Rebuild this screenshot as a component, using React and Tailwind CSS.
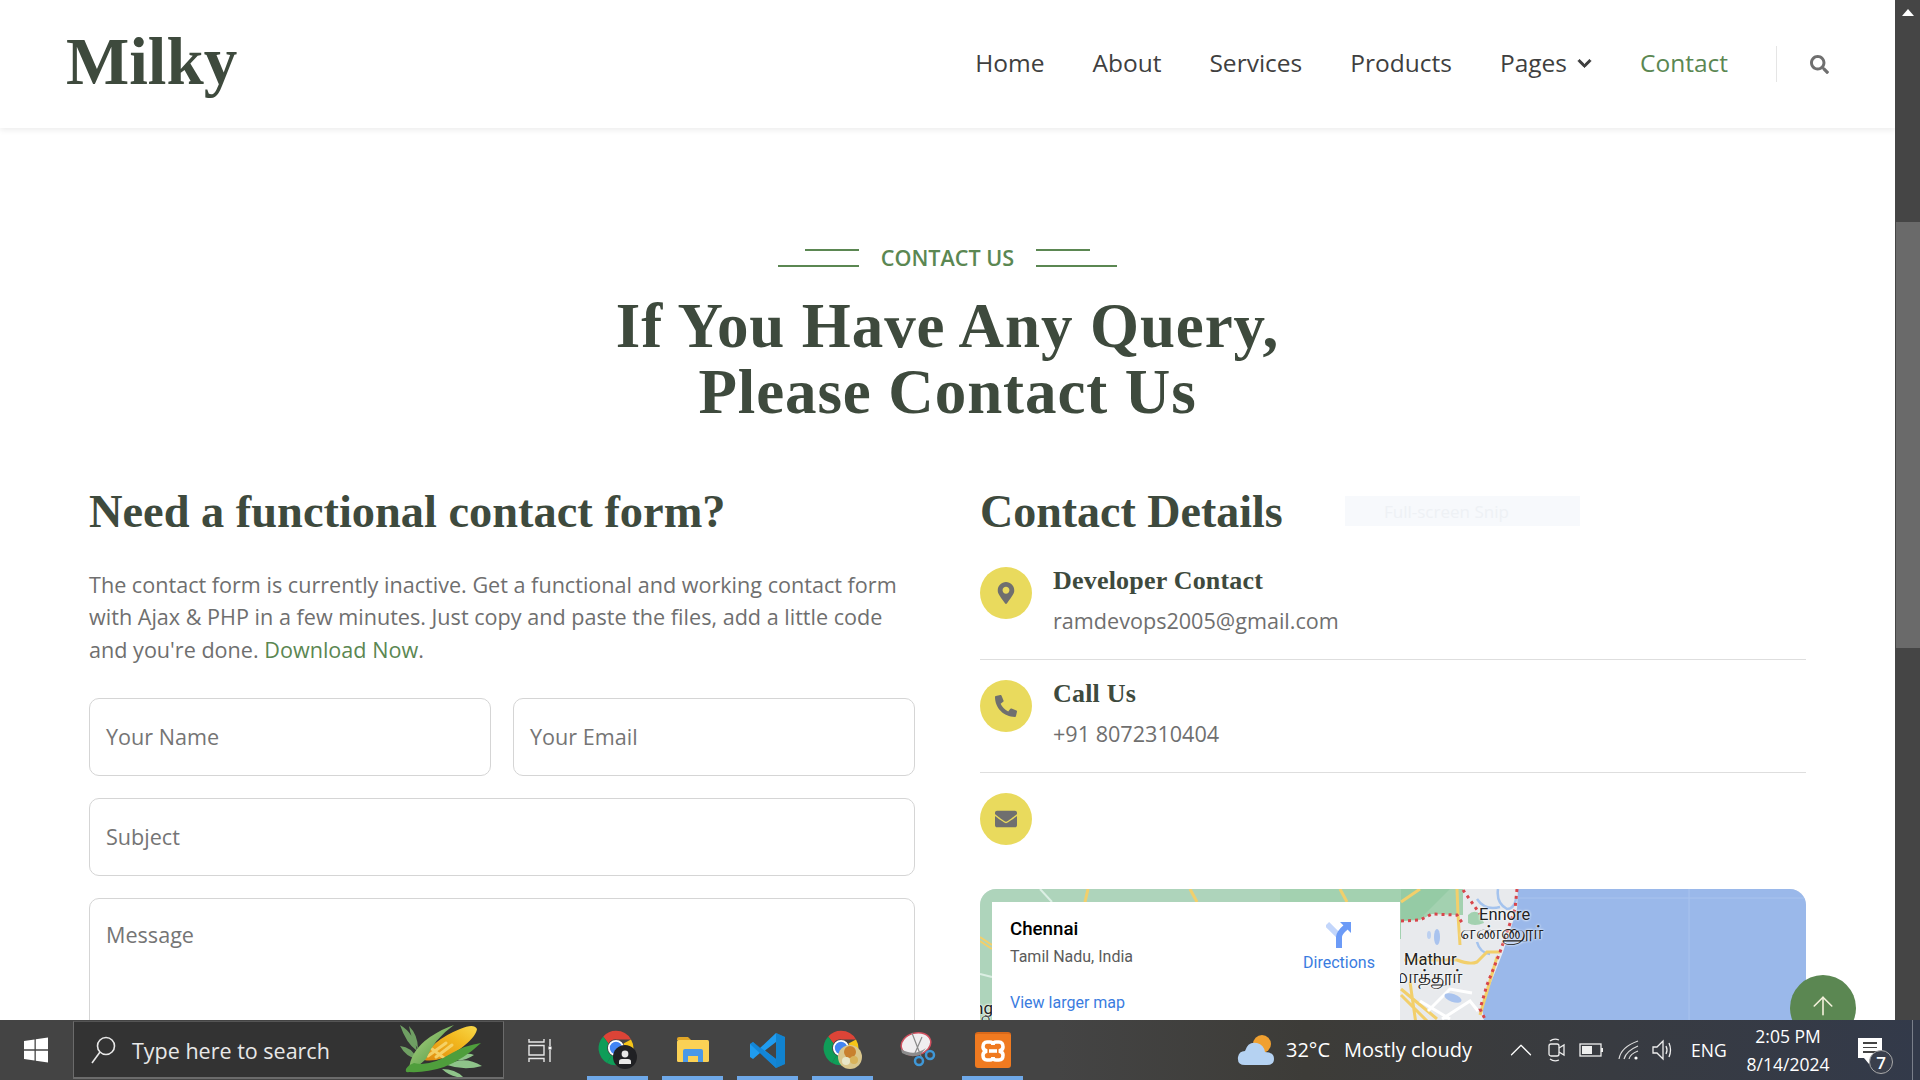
import React from 'react';
import { FaMapMarkerAlt, FaPhoneAlt, FaEnvelope, FaSearch, FaChevronDown } from 'react-icons/fa';
import { ArrowUp, ChevronUp } from 'lucide-react';

const serif = "font-['Liberation_Serif',serif]";

function Eyebrow() {
  const Lines = ({ right }) => (
    <div className={`flex flex-col gap-[14px] w-[81px] ${right ? 'items-start' : 'items-end'}`}>
      <div className="w-[54px] h-[2px] bg-[#5b8752]" />
      <div className="w-[81px] h-[2px] bg-[#5b8752]" />
    </div>
  );
  return (
    <div className="flex items-center justify-center gap-[22px]">
      <Lines />
      <span className="text-[21.6px] leading-[30px] font-semibold text-[#5b8752]">CONTACT US</span>
      <Lines right />
    </div>
  );
}

function Field({ label, className = '' }) {
  return (
    <div className={`border border-[#d5d5d5] rounded-[10px] px-[16px] text-[21.6px] text-[#757575] bg-white ${className}`}>
      {label}
    </div>
  );
}

function Detail({ Icon, title, text, size, last }) {
  return (
    <div className={`flex gap-[21px] h-[113px] ${last ? '' : 'border-b border-[#dedede]'}`}>
      <div className="w-[52px] h-[52px] rounded-full bg-[#e9da5d] flex items-center justify-center mt-[20px] shrink-0 text-[#6f6f6f]">
        <Icon size={size} />
      </div>
      {title && (
        <div className="pt-[19px]">
          <div className={`${serif} font-bold text-[26px] leading-[30px] text-[#3e4a3d] tracking-[0.2px]`}>{title}</div>
          <div className="text-[21.6px] leading-[30px] text-[#6f6f6f] mt-[10px]">{text}</div>
        </div>
      )}
    </div>
  );
}

function MapBase() {
  return (
    <svg width="826" height="140" viewBox="0 0 826 140" className="block">
      <rect width="826" height="140" fill="#e8eaed" />
      <path d="M0 0H300V140H0Z" fill="#aed4bb" />
      <path d="M300 0H483V26L477 26L452 25L440 31L421 32V50H300Z" fill="#a3d1b0" />
      <path d="M421 0H470L440 30L421 32Z" fill="#95cba5" />
      <path d="M488 26 Q494 20 500 25 L504 34 Q494 38 488 34Z" fill="#a3d1b0" />
      <path d="M538 0 L537 20 L523 63 L510 96 L502 116 L505 140 H826 V0Z" fill="#9ab8ea" />
      <path d="M709 0V140M537 9H826" stroke="#a9c3ee" strokeWidth="1" fill="none" />
      <path d="M518 0 Q516 14 527 20 Q534 20 536 10M497 53 Q500 64 510 65M497 10 Q505 22 520 18" stroke="#a4c3ee" strokeWidth="2.5" fill="none" />
      <path d="M360 0 L367 13M440 0 L421 13M477 0 L478 26 L480 56M424 71 H477 Q490 76 497 73 L507 63 H520M517 68 L500 126M421 100 L457 130M421 106 L450 135M430 93 L436 135M108 0 L105 13M210 0 L217 13" stroke="#f2cf6b" strokeWidth="3" fill="none" />
      <path d="M0 48 L12 56M0 52 L12 60" stroke="#f2cf6b" strokeWidth="2" fill="none" />
      <path d="M60 0 L72 13M0 85 L12 88" stroke="#dcefe4" strokeWidth="2" fill="none" />
      <path d="M448 122 L470 100 L492 104 M462 130 L490 112 L498 122 M440 112 L470 130" stroke="#ffffff" strokeWidth="3" fill="none" />
      <path d="M421 32 L440 31 L452 25 L477 26 L483 35M483 1 L500 25M537 0 L535 20 L520 63 L507 96 L500 120 L505 130" stroke="#d8454b" strokeWidth="3" strokeDasharray="3 4" fill="none" />
      <ellipse cx="457" cy="48" rx="3" ry="8" fill="#a9c3ee" />
      <ellipse cx="449" cy="46" rx="2" ry="4" fill="#bcd0f0" />
      <ellipse cx="473" cy="109" rx="9" ry="4" fill="#a9c3ee" transform="rotate(20 473 109)" />
    </svg>
  );
}

function MapLabel({ children, className }) {
  return <span className={`absolute font-['Roboto','Noto_Sans',sans-serif] leading-[20px] text-[#222] [text-shadow:0_0_2px_#fff,0_0_3px_#fff] ${className}`}>{children}</span>;
}

function GoogleMap() {
  return (
    <div className="relative h-[300px] rounded-[16px] overflow-hidden">
      <MapBase />
      <MapLabel className="left-[499px] top-[16px] text-[16.5px]">Ennore</MapLabel>
      <MapLabel className="left-[480px] top-[33px] text-[20px]">எண்ணூர்</MapLabel>
      <MapLabel className="left-[424px] top-[61px] text-[16.5px]">Mathur</MapLabel>
      <MapLabel className="left-[412px] top-[77px] text-[20px]">மாத்தூர்</MapLabel>
      <MapLabel className="-left-[6px] top-[109px] text-[17px]">ng</MapLabel>
      <MapLabel className="-left-[3px] top-[124px] text-[17px]">நி</MapLabel>
      <div className="absolute left-[12px] top-[13px] w-[408px] h-[200px] bg-white font-['Roboto',sans-serif]">
        <div className="absolute left-[18px] top-[15px] text-[18.7px] leading-[24px] font-medium text-black">Chennai</div>
        <div className="absolute left-[18px] top-[45px] text-[16px] leading-[20px] text-[#5b5b5b]">Tamil Nadu, India</div>
        <div className="absolute left-[18px] top-[91px] text-[16px] leading-[20px] text-[#3a7ce0]">View larger map</div>
        <div className="absolute left-[307px] top-[18px] w-[80px] flex flex-col items-center">
          <svg width="26" height="28" viewBox="0 0 26 28">
            <path d="M1 4 L13 16" stroke="#c3d6fb" strokeWidth="6" fill="none" />
            <path d="M13 28 V17 Q13 13 20 7" stroke="#6c9bf7" strokeWidth="6" fill="none" />
            <path d="M14 2 H25 V13Z" fill="#6c9bf7" />
          </svg>
          <div className="text-[16px] leading-[20px] text-[#3a7ce0] mt-[5px]">Directions</div>
        </div>
      </div>
    </div>
  );
}

function Chrome({ badge }) {
  return (
    <div className="relative w-[40px] h-[40px]">
      <svg width="36" height="36" viewBox="0 0 48 48">
        <path d="M24 1 A23 23 0 0 1 44 12.5 H24 A11.5 11.5 0 0 0 14 18 L7 8.5 A23 23 0 0 1 24 1Z" fill="#dc4437" />
        <path d="M7 8.5 L14 18 A11.5 11.5 0 0 0 18 34 L12 44 A23 23 0 0 1 7 8.5Z" fill="#0f9d58" />
        <path d="M44 12.5 A23 23 0 0 1 24 47 L30 34 A11.5 11.5 0 0 0 34 18Z" fill="#f5c518" />
        <path d="M12 44 L18 34 A11.5 11.5 0 0 0 30 34 L24 47 A23 23 0 0 1 12 44Z" fill="#0f9d58" />
        <circle cx="24" cy="24" r="9.5" fill="#4285f4" stroke="#fff" strokeWidth="2.5" />
      </svg>
      {badge === 'person' ? (
        <div className="absolute left-[15px] top-[15px] w-[24px] h-[24px] rounded-full bg-[#202124] flex items-center justify-center">
          <svg width="16" height="16" viewBox="0 0 16 16"><circle cx="8" cy="5" r="3.4" fill="#e8e8e8" /><path d="M2 15 V12.5 Q2 10 5 10 H11 Q14 10 14 12.5 V15Z" fill="#e8e8e8" /></svg>
        </div>
      ) : (
        <div className="absolute left-[15px] top-[15px] w-[24px] h-[24px] rounded-full bg-[#d9c68c] overflow-hidden">
          <svg width="24" height="24" viewBox="0 0 24 24"><circle cx="12" cy="7" r="6" fill="#c8802e" /><circle cx="8" cy="16" r="4" fill="#e8e6c8" /><circle cx="16" cy="15" r="4" fill="#d8b25a" /></svg>
        </div>
      )}
    </div>
  );
}

const Folder = () => (
  <svg width="34" height="28" viewBox="0 0 34 28">
    <path d="M1 3 Q1 1 3 1 H12 L15 4 H1Z" fill="#e0a526" />
    <rect x="1" y="4" width="32" height="22" rx="1.5" fill="#fbd155" />
    <path d="M7 26 V15 Q7 13 9 13 H25 Q27 13 27 15 V26 H22 V20 H12 V26Z" fill="#4a98e8" />
  </svg>
);

const VSCode = () => (
  <svg width="37" height="37" viewBox="0 0 37 37">
    <path d="M27 1 L36 5 V32 L27 36 L11 21 L4 27 L1 25 V12 L4 10 L11 16Z M27 10 L16 18.5 L27 27Z" fill="#1f9cf0" fillRule="evenodd" />
    <path d="M27 1 L36 5 V32 L27 36Z" fill="#0065a9" opacity="0.45" />
    <path d="M1 12 L4 10 L27 27 V36 L1 12Z" fill="#0a74c4" opacity="0.55" />
  </svg>
);

const Snip = () => (
  <svg width="36" height="38" viewBox="0 0 36 38">
    <ellipse cx="16" cy="13" rx="15" ry="11" fill="#f0eef0" stroke="#d0505f" strokeWidth="1.5" transform="rotate(-15 16 13)" />
    <path d="M1 18 Q14 26 26 17 L20 24 Q10 27 2 22Z" fill="#8c8c8c" />
    <path d="M12 2 L22 28M22 6 L15 22" stroke="#8a8a8a" strokeWidth="1.2" />
    <circle cx="19" cy="30" r="4" fill="none" stroke="#3f98d8" strokeWidth="2.5" />
    <circle cx="30" cy="24" r="4" fill="none" stroke="#3f98d8" strokeWidth="2.5" />
  </svg>
);

const Xampp = () => (
  <div className="w-[36px] h-[36px] rounded-[3px] bg-[#f07a20] border-t-[2px] border-[#d9691a] flex items-center justify-center">
    <svg width="26" height="28" viewBox="0 0 26 28" fill="none" stroke="#fff" strokeWidth="3.6">
      <path d="M7 5 Q3 5 3 10 Q3 13 7 14 Q3 15 3 18 Q3 23 7 23 H10 Q13 23 13 20 Q13 23 16 23 H19 Q23 23 23 18 Q23 15 19 14 Q23 13 23 10 Q23 5 19 5 H16 Q13 5 13 8 Q13 5 10 5Z" />
      <path d="M9 14 H17" />
    </svg>
  </div>
);

const Corn = () => (
  <svg width="82" height="56" viewBox="0 0 82 56">
    <defs>
      <linearGradient id="cob" x1="0" y1="1" x2="1" y2="0">
        <stop offset="0" stopColor="#e08a10" />
        <stop offset="0.6" stopColor="#f2b81e" />
        <stop offset="1" stopColor="#f8d84a" />
      </linearGradient>
      <linearGradient id="husk" x1="0" y1="0" x2="1" y2="1">
        <stop offset="0" stopColor="#b7d88a" />
        <stop offset="1" stopColor="#3f8f36" />
      </linearGradient>
    </defs>
    <path d="M0 2 Q14 10 17 28 Q6 20 0 2Z M9 3 Q18 12 18 26 Q11 16 9 3Z M0 23 Q12 24 17 36 Q6 34 0 23Z" fill="#6f9f63" />
    <path d="M47 42 Q64 32 82 43 Q64 48 47 42Z M42 46 Q56 46 64 55 Q50 54 42 46Z M52 36 Q66 28 74 32 Q62 40 52 36Z" fill="#8fc48a" />
    <path d="M24 37 Q30 18 60 6 Q74 0 77 6 Q76 14 60 26 Q40 40 24 37Z" fill="url(#cob)" />
    <path d="M28 33 L46 20 M36 34 L52 22 M32 26 L44 35" stroke="#f8dc78" strokeWidth="3" strokeLinecap="round" opacity="0.8" />
    <path d="M9 47 Q10 28 30 14 Q44 5 54 2 Q34 16 26 36 Q18 44 9 47Z" fill="url(#husk)" />
    <path d="M9 49 Q5 50 6 46 Q8 42 14 40 Q30 44 52 30 Q66 22 81 20 Q64 36 44 44 Q26 50 9 49Z" fill="#4f9e3c" />
  </svg>
);

function TaskIcon({ active, children }) {
  return (
    <div className="relative w-[61px] h-[60px] flex items-center justify-center mr-[14px]">
      {children}
      {active && <div className="absolute left-0 right-0 bottom-0 h-[4px] bg-[#6ea8e8]" />}
    </div>
  );
}

function Taskbar() {
  return (
    <div className="h-[60px] shrink-0 flex items-center text-white font-['Open_Sans',sans-serif] bg-[linear-gradient(90deg,#444444_0%,#444444_55%,#3d3c38_68%,#333a4a_100%)]">
      <div className="w-[72px] mr-[1px] flex justify-center">
        <svg width="26" height="26" viewBox="0 0 26 26" fill="#fff">
          <path d="M1 4 L11.5 2.5 V12.3 H1Z M12.8 2.3 L25 0.5 V12.3 H12.8Z M1 13.7 H11.5 V23.5 L1 22Z M12.8 13.7 H25 V25.5 L12.8 23.7Z" />
        </svg>
      </div>
      <div className="w-[431px] h-[58px] bg-[#333333] border-b-[2px] border-x border-[#6b6b6b] border-t border-t-[#555] flex items-center overflow-hidden relative">
        <svg className="ml-[16px]" width="26" height="30" viewBox="0 0 26 30" fill="none" stroke="#e8e8e8" strokeWidth="1.6">
          <circle cx="16" cy="11" r="8.5" />
          <path d="M10 17 L2 28" />
        </svg>
        <span className="ml-[16px] text-[21.5px] pt-[3px] text-[#e8e8e8]">Type here to search</span>
        <div className="absolute left-[326px] top-[1px]"><Corn /></div>
      </div>
      <div className="ml-[24px] w-[59px] flex justify-start">
        <svg width="24" height="23" viewBox="0 0 24 23" fill="none" stroke="#e6e6e6" strokeWidth="1.4">
          <path d="M1 0 V3 H16 V0 M1 6.5 H16 V16 H1Z M1 23 V19.5 H16 V23 M22 0 V7 M22 11 V23" />
          <rect x="20.5" y="7.5" width="3" height="3" fill="#fff" stroke="none" />
        </svg>
      </div>
      <TaskIcon active><Chrome badge="person" /></TaskIcon>
      <TaskIcon active><Folder /></TaskIcon>
      <TaskIcon active><VSCode /></TaskIcon>
      <TaskIcon active><Chrome badge="photo" /></TaskIcon>
      <TaskIcon><Snip /></TaskIcon>
      <TaskIcon active><Xampp /></TaskIcon>
      <div className="flex-1" />
      <svg width="38" height="32" viewBox="0 0 38 32">
        <circle cx="25" cy="10" r="9" fill="#f0a030" />
        <path d="M8 31 Q0 31 1 23 Q2 17 8 17 Q11 7 20 9 Q27 11 28 18 Q37 18 37 25 Q37 31 30 31Z" fill="#b5d2f2" />
      </svg>
      <span className="ml-[11px] text-[20px]">32°C</span>
      <span className="ml-[14px] text-[20px] w-[158px]">Mostly cloudy</span>
      <ChevronUp size={38} strokeWidth={0.8} className="mr-[8px]" />
      <svg width="18" height="26" viewBox="0 0 18 26" fill="none" stroke="#eee" strokeWidth="1.3" className="mr-[13px]">
        <rect x="1" y="7" width="10" height="12" rx="2" /><path d="M11 11 L16 8 V18 L11 15" /><path d="M2 4 Q6 1 11 3 M2 22 Q6 25 11 23" />
      </svg>
      <svg width="24" height="14" viewBox="0 0 24 14" fill="none" className="mr-[15px]">
        <rect x="1" y="1" width="21" height="12" stroke="#eee" strokeWidth="1.3" /><rect x="3" y="3" width="10" height="8" fill="#eee" /><rect x="22" y="5" width="2" height="4" fill="#eee" />
      </svg>
      <svg width="22" height="20" viewBox="0 0 22 20" fill="none" stroke="#ddd" strokeWidth="1.2" className="mr-[12px]">
        <path d="M1 19 Q3 7 20 1 M6 19 Q8 11 20 6 M11 19 Q12 14 20 11" /><circle cx="18" cy="18" r="1.6" fill="#fff" stroke="none" />
      </svg>
      <svg width="23" height="22" viewBox="0 0 23 22" fill="none" stroke="#eee" strokeWidth="1.3" className="mr-[16px]">
        <path d="M1 8 H5 L11 2 V20 L5 14 H1Z M14 7 Q16 11 14 15 M17 4 Q20 11 17 18" />
      </svg>
      <span className="text-[17.5px] w-[47px]">ENG</span>
      <div className="w-[100px] text-center text-[17.5px] leading-[28px]">
        <div>2:05 PM</div>
        <div>8/14/2024</div>
      </div>
      <div className="relative w-[35px] h-[60px] ml-[20px] mr-[27px]">
        <div className="absolute left-0 top-[18px] w-[24px] h-[20px] bg-white flex flex-col gap-[3px] px-[5px] pt-[4px]">
          <div className="h-[1.5px] bg-[#444]" /><div className="h-[1.5px] bg-[#444]" /><div className="h-[1.5px] bg-[#444]" />
        </div>
        <div className="absolute left-[6px] top-[38px] w-0 h-0 border-t-[6px] border-t-white border-l-[5px] border-l-transparent border-r-[5px] border-r-transparent" />
        <div className="absolute left-[11px] top-[30px] w-[24px] h-[24px] rounded-full bg-[#3a3f4c] border border-[#aaa] flex items-center justify-center text-[17px] font-semibold leading-none">7</div>
      </div>
      <div className="absolute right-[7px] bottom-0 h-[60px] w-px bg-[#7a7f8a]" />
    </div>
  );
}

export default function App() {
  return (
    <div className="h-screen flex flex-col overflow-hidden relative font-['Open_Sans',sans-serif]">
      <div className="flex-1 min-h-0 flex">
        <div className="flex-1 min-w-0 relative overflow-hidden bg-white">
          <header className="h-[128px] flex items-center justify-between pl-[66px] pr-[66px] shadow-[0_2px_6px_rgba(0,0,0,0.08)] relative">
            <div className={`${serif} font-bold text-[67px] text-[#3e4a3d] leading-none -mt-[6px]`}>Milky</div>
            <nav className="flex items-center text-[24.5px] text-[#3f3f3f] -mt-[1px]">
              <a className="mr-[48px]">Home</a>
              <a className="mr-[48px]">About</a>
              <a className="mr-[48px]">Services</a>
              <a className="mr-[48px]">Products</a>
              <a className="mr-[48px] flex items-center gap-[10px]">Pages <FaChevronDown size={15} className="stroke-current stroke-[30]" /></a>
              <a className="text-[#5b8752] mr-[48px]">Contact</a>
              <div className="w-px h-[36px] bg-[#e5e5e5] mr-[33px]" />
              <FaSearch size={19} className="text-[#6f6f6f] mt-[1px]" />
            </nav>
          </header>
          <main className="px-[89px] pt-[115px]">
            <Eyebrow />
            <h1 className={`${serif} font-bold text-[63px] tracking-[0.9px] leading-[66px] text-[#3e4a3d] text-center mt-[20px]`}>
              If You Have Any Query,<br />Please Contact Us
            </h1>
            <div className="grid grid-cols-2 gap-[65px] mt-[59px]">
              <div>
                <h2 className={`${serif} font-bold text-[46.4px] leading-[56px] text-[#3e4a3d]`}>Need a functional contact form?</h2>
                <p className="text-[21.6px] leading-[32.4px] text-[#6f6f6f] mt-[29px]">
                  The contact form is currently inactive. Get a functional and working contact form with Ajax &amp; PHP in a few minutes. Just copy and paste the files, add a little code and you're done. <span className="text-[#5b8752]">Download Now</span>.
                </p>
                <div className="grid grid-cols-2 gap-[22px] mt-[32px]">
                  <Field label="Your Name" className="h-[78px] flex items-center" />
                  <Field label="Your Email" className="h-[78px] flex items-center" />
                  <Field label="Subject" className="h-[78px] flex items-center col-span-2" />
                  <Field label="Message" className="h-[200px] pt-[20px] col-span-2" />
                </div>
              </div>
              <div>
                <h2 className={`${serif} font-bold text-[46px] leading-[56px] text-[#3e4a3d]`}>Contact Details</h2>
                <div className="mt-[7px]">
                  <Detail Icon={FaMapMarkerAlt} size={22} title="Developer Contact" text="ramdevops2005@gmail.com" />
                  <Detail Icon={FaPhoneAlt} size={22} title="Call Us" text="+91 8072310404" />
                  <Detail Icon={FaEnvelope} size={22} last />
                </div>
                <div className="mt-[3px]"><GoogleMap /></div>
              </div>
            </div>
          </main>
          <div className="absolute left-[1345px] top-[496px] w-[235px] h-[30px] bg-[#f7f9fc] text-[#eef1f5] text-[17px] leading-[32px] pl-[39px]">Full-screen Snip</div>
          <div className="absolute left-[1790px] top-[975px] w-[66px] h-[66px] rounded-full bg-[#5b8752] flex items-start justify-center pt-[16px] text-[#f4f1dc]">
            <ArrowUp size={30} strokeWidth={1.3} />
          </div>
        </div>
        <div className="w-[25px] bg-[#454545] relative flex flex-col items-center shrink-0">
          <div className="mt-[9px] w-0 h-0 border-x-[6px] border-x-transparent border-b-[7px] border-b-white" />
          <div className="absolute left-[1px] right-0 top-[222px] h-[426px] bg-[#6a6a6a]" />
        </div>
      </div>
      <Taskbar />
    </div>
  );
}
